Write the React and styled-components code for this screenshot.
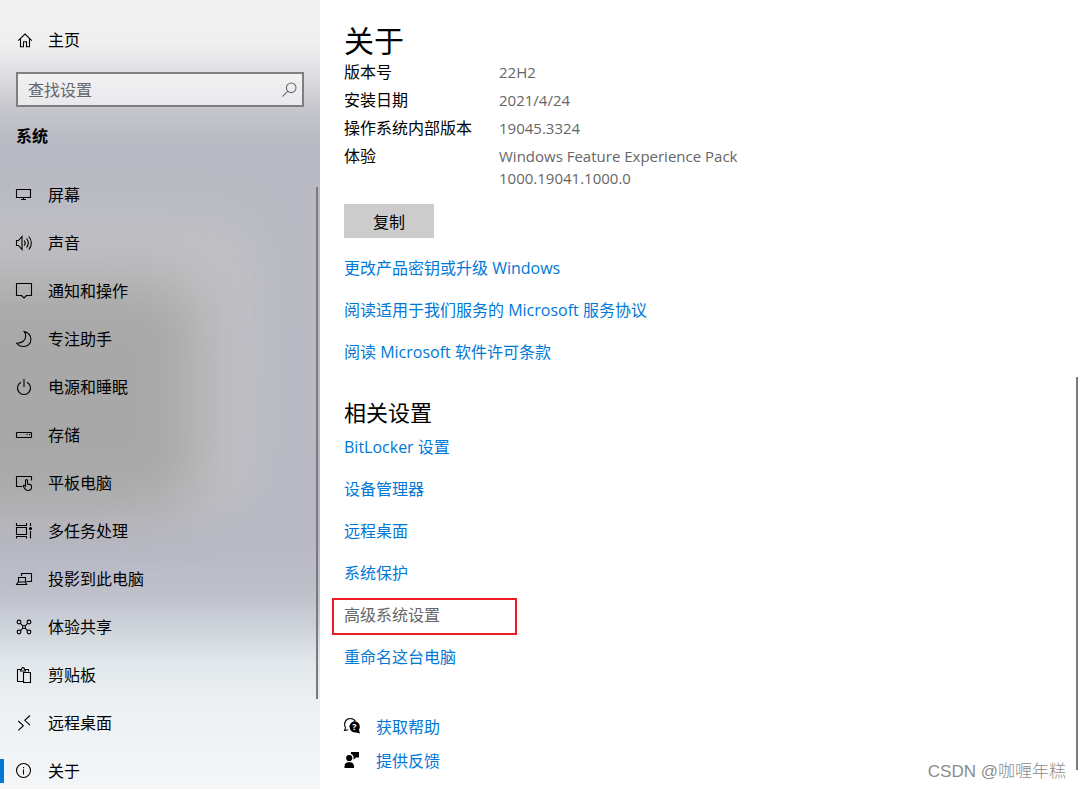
import styled, { createGlobalStyle } from "styled-components";

const GlobalStyle = createGlobalStyle`
  *,
  *::before,
  *::after {
    box-sizing: border-box;
  }

  body {
    margin: 0;
    background: #fff;
    color: #000;
    font-family: "Open Sans", "Noto Sans CJK SC", sans-serif;
    font-size: 16px;
    line-height: 22px;
  }

  a {
    color: inherit;
    text-decoration: none;
  }

  ul {
    list-style: none;
    margin: 0;
    padding: 0;
  }
`;

const Page = styled.div`
  position: relative;
  display: grid;
  grid-template-columns: 320px 1fr;
  height: 100vh;
  overflow: hidden;
`;

const Sidebar = styled.aside`
  position: relative;
  z-index: 0;
  display: flex;
  flex-direction: column;
  min-height: 0;
  padding-top: 16px;
  overflow: hidden;
  background: linear-gradient(
    to bottom,
    #f1f1f1 0,
    #efeff0 44px,
    #dedee1 76px,
    #c6c6cd 108px,
    #babac4 140px,
    #b9b9c5 540px,
    #bdbfc9 590px,
    #ccd1d9 625px,
    #e0e6ea 660px,
    #edf1f3 710px,
    #f5f6f7 789px
  );
`;

const Haze = styled.div`
  position: absolute;
  z-index: -1;
  left: -120px;
  top: ${({ $top }) => $top}px;
  width: ${({ $width }) => $width}px;
  height: ${({ $height }) => $height}px;
  border-radius: 40px;
  background: ${({ $color }) => $color};
  filter: blur(${({ $blur }) => $blur}px);
`;

const NavLink = styled.a`
  position: relative;
  display: flex;
  align-items: center;
  gap: 16px;
  height: 48px;
  padding: 0 16px;

  &[aria-current="page"]::before {
    content: "";
    position: absolute;
    left: 0;
    top: 12px;
    width: 4px;
    height: 24px;
    background: #0078d7;
  }
`;

const Search = styled.label`
  display: flex;
  align-items: center;
  flex-shrink: 0;
  height: 35px;
  margin: 8px 16px 5px;
  padding: 0 5px 0 10px;
  border: 2px solid #7f7f83;
  background: rgba(255, 255, 255, 0.6);
  color: #6a6a6d;
`;

const SearchInput = styled.input`
  flex: 1;
  min-width: 0;
  padding: 0;
  border: 0;
  outline: 0;
  background: transparent;
  font: inherit;

  &::placeholder {
    color: #66666a;
    opacity: 1;
  }
`;

const GroupTitle = styled.h2`
  flex-shrink: 0;
  margin: 0 16px 11px;
  font-size: 16px;
  line-height: 48px;
  font-weight: 700;
`;

const NavList = styled.ul`
  flex: 1;
  min-height: 0;
  overflow-y: auto;
  scrollbar-width: none;
`;

const ScrollThumb = styled.div`
  position: absolute;
  right: 2px;
  top: ${({ $top }) => $top}px;
  width: 2px;
  height: ${({ $height }) => $height}px;
  background: #7a7a7c;
`;

const Main = styled.main`
  min-width: 0;
  padding: 21px 24px 0;
  overflow-y: auto;
  scrollbar-width: none;
`;

const Title = styled.h1`
  margin: 0;
  font-size: 30px;
  line-height: 40px;
  font-weight: 400;
`;

const Specs = styled.dl`
  display: grid;
  grid-template-columns: 155px minmax(0, 250px);
  row-gap: 6px;
  margin: 0 0 15px;
`;

const Label = styled.dt``;

const Value = styled.dd`
  margin: 0;
  color: #666;
  font-size: 15px;
`;

const CopyButton = styled.button`
  width: 90px;
  height: 34px;
  margin-bottom: 19px;
  padding: 2px 0 0;
  border: 0;
  background: #ccc;
  color: #000;
  font: inherit;
`;

const SectionTitle = styled.h2`
  margin: 34px 0 9px;
  font-size: 22px;
  line-height: 30px;
  font-weight: 400;
`;

const LinkList = styled.ul`
  display: flex;
  flex-direction: column;
  gap: 20px;
  color: #0078d7;
`;

const LinkItem = styled.li`
  position: relative;
`;

const MarkedItem = styled(LinkItem)`
  color: #666;

  &::after {
    content: "";
    position: absolute;
    left: -12px;
    top: -6px;
    width: 185px;
    height: 37px;
    border: 2px solid #ed1c24;
    pointer-events: none;
  }
`;

const HelpList = styled(LinkList)`
  gap: 12px;
  margin-top: 48px;
`;

const HelpLink = styled.a`
  display: flex;
  align-items: center;
  gap: 16px;

  svg {
    color: #000;
  }
`;

const Watermark = styled.div`
  position: absolute;
  right: 14px;
  bottom: 6px;
  color: #8c8c8c;
  font-family: "Liberation Sans", "Noto Sans CJK SC", sans-serif;
  font-size: 17px;
  font-weight: 300;
`;

const Svg = styled.svg`
  flex-shrink: 0;
  width: 16px;
  height: 16px;
  overflow: visible;
  fill: none;
  stroke: currentColor;
  stroke-width: 1.1;
`;

const Icon = ({ children }) => (
  <Svg viewBox="0 0 16 16" aria-hidden="true">
    {children}
  </Svg>
);

const icons = {
  home: <path d="M2.2 8.7 9 2l6.8 6.7M4.5 6.7v8h3v-5h3v5h3v-8" />,
  search: (
    <>
      <circle cx="10.2" cy="5.8" r="4.8" />
      <path d="m6.8 9.2-5.5 5.5" />
    </>
  ),
  display: <path d="M.5 2.5h14v8H.5zM7.5 10.5v2M5 12.5h5" />,
  sound: (
    <>
      <path d="M.5 5.5h2l3.5-4v13l-3.5-4h-2z" />
      <path d="M8.2 5.5c1.2 1.5 1.2 3.5 0 5M10.5 3.5c2.2 2.7 2.2 6.3 0 9M12.8 1.5c3.4 3.8 3.4 9.2 0 13" />
    </>
  ),
  notify: <path d="M.5.5h15v12h-5L8 15l-2.5-2.5h-5z" />,
  moon: <path d="M8.3.6c4.2 1 6.6 4 6.6 7.8 0 4.2-3.2 7.1-7.2 7.1-3 0-5.6-1.2-7-3.3 5.5.1 9-2.8 9-7.2 0-1.7-.5-3.2-1.4-4.4z" />,
  power: <path d="M5 3.2a6.5 6.5 0 1 0 6 0M8 0v8" />,
  storage: (
    <>
      <rect x=".5" y="5.5" width="15" height="5" rx=".6" />
      <path d="M10.5 7.5h1.2M13 7.5h1.2" />
    </>
  ),
  tablet: (
    <>
      <path d="M6 11.5H.5v-10h15v4" />
      <path d="M9.5 11.2V5.7c0-1.5 2-1.5 2 0V9l2.8.6c.8.2 1.2.7 1.2 1.5v1.2c0 2-1.3 3.2-3.3 3.2-1.7 0-2.7-.6-3.5-1.9l-1.500-2.300c-.2-1 1-1.300 1.600-.7z" />
    </>
  ),
  multitask: (
    <>
      <path d="M.5 0v2.5h10V0M.5 4.5h10v7H.5zM.5 15.5v-2h10v2M14.5 0v3M14.5 8v7.5" />
      <circle cx="14.5" cy="5.5" r="1" fill="currentColor" />
    </>
  ),
  project: <path d="M5.5 5V2.5h10v8h-5M2.5 11V6.5h7V11M.6 13.5l1.6-2.5h7.2l1.3 2.5z" />,
  share: (
    <>
      <circle cx="3" cy="3" r="1.9" />
      <circle cx="13" cy="3" r="1.9" />
      <circle cx="3" cy="13" r="1.9" />
      <circle cx="13" cy="13" r="1.9" />
      <circle cx="8" cy="8" r="1.5" />
      <path d="m4.4 4.4 2.5 2.5M11.6 4.4 9.1 6.9M4.4 11.6l2.5-2.5M11.6 11.6 9.1 9.1" />
    </>
  ),
  clipboard: (
    <path d="M7 14.5H1.5v-12h3M9.5 2.5h3v2M4.5 4V2.5h1C5.500 0 8.500 0 8.500 2.500h1V4zM7.500 5.500h7v10h-7z" />
  ),
  remote: <path d="m2.3 6 5 4.7-5 4.7M14 .5 8.8 5.3l5.2 4.9" />,
  about: (
    <>
      <circle cx="7.5" cy="7.5" r="7" />
      <path d="M7.5 6.5v5M7.5 4v1.3" />
    </>
  ),
};

const navItems = [
  { icon: "display", name: "屏幕" },
  { icon: "sound", name: "声音" },
  { icon: "notify", name: "通知和操作" },
  { icon: "moon", name: "专注助手" },
  { icon: "power", name: "电源和睡眠" },
  { icon: "storage", name: "存储" },
  { icon: "tablet", name: "平板电脑" },
  { icon: "multitask", name: "多任务处理" },
  { icon: "project", name: "投影到此电脑" },
  { icon: "share", name: "体验共享" },
  { icon: "clipboard", name: "剪贴板" },
  { icon: "remote", name: "远程桌面" },
  { icon: "about", name: "关于", current: true },
];

const specs = [
  ["版本号", "22H2"],
  ["安装日期", "2021/4/24"],
  ["操作系统内部版本", "19045.3324"],
  ["体验", "Windows Feature Experience Pack 1000.19041.1000.0"],
];

const licenseLinks = [
  "更改产品密钥或升级 Windows",
  "阅读适用于我们服务的 Microsoft 服务协议",
  "阅读 Microsoft 软件许可条款",
];

const relatedLinks = [
  { name: "BitLocker 设置" },
  { name: "设备管理器" },
  { name: "远程桌面" },
  { name: "系统保护" },
  { name: "高级系统设置", marked: true },
  { name: "重命名这台电脑" },
];

function HelpIcon() {
  return (
    <Icon>
      <path d="M1.6 8.6C-1 4.200 1.800-.5 6.200-.5c2.400 0 4.200 1 5.200 2.800M1.600 8.600.5 11.500l3.700-.8" />
      <path
        stroke="none"
        fill="currentColor"
        d="M10.3 2.200a5.700 5.700 0 0 1 4.700 8.800l1 3.600-3.800-1.100a5.700 5.700 0 1 1-1.900-11.300z"
      />
      <text
        x="10.3"
        y="11"
        fill="#fff"
        stroke="none"
        fontSize="9"
        fontWeight="700"
        textAnchor="middle"
      >
        ?
      </text>
    </Icon>
  );
}

function FeedbackIcon() {
  return (
    <Icon>
      <g fill="currentColor" stroke="none">
        <circle cx="5.2" cy="5" r="3.1" />
        <path d="M.5 15v-1.700c0-2.500 1.700-4.100 4-4.100H6c2.300 0 4 1.600 4 4.100V15z" />
        <path d="M7-1h8v5.500h-3L9.500 6.700V4C9.300 2.500 8.500 1.300 7 1z" />
      </g>
    </Icon>
  );
}

export default function App() {
  return (
    <>
      <GlobalStyle />
      <Page>
        <Sidebar>
          <Haze $top={222} $width={372} $height={290} $blur={24} $color="#c1c1c4" />
          <Haze $top={280} $width={318} $height={232} $blur={28} $color="#a8a8a8" />
          <NavLink href="#home">
            <Icon>{icons.home}</Icon>
            主页
          </NavLink>
          <Search>
            <SearchInput type="text" placeholder="查找设置" aria-label="查找设置" />
            <Icon>{icons.search}</Icon>
          </Search>
          <GroupTitle>系统</GroupTitle>
          <NavList>
            {navItems.map((item) => (
              <li key={item.name}>
                <NavLink href={`#${item.icon}`} aria-current={item.current ? "page" : undefined}>
                  <Icon>{icons[item.icon]}</Icon>
                  {item.name}
                </NavLink>
              </li>
            ))}
          </NavList>
          <ScrollThumb $top={187} $height={512} />
        </Sidebar>

        <Main>
          <Title>关于</Title>
          <Specs>
            {specs.map(([label, value]) => [
              <Label key={label}>{label}</Label>,
              <Value key={value}>{value}</Value>,
            ])}
          </Specs>
          <CopyButton type="button">复制</CopyButton>
          <LinkList>
            {licenseLinks.map((name) => (
              <LinkItem key={name}>
                <a href="#license">{name}</a>
              </LinkItem>
            ))}
          </LinkList>

          <SectionTitle>相关设置</SectionTitle>
          <LinkList>
            {relatedLinks.map(({ name, marked }) => {
              const Item = marked ? MarkedItem : LinkItem;
              return (
                <Item key={name}>
                  <a href="#related">{name}</a>
                </Item>
              );
            })}
          </LinkList>

          <HelpList>
            <li>
              <HelpLink href="#help">
                <HelpIcon />
                获取帮助
              </HelpLink>
            </li>
            <li>
              <HelpLink href="#feedback">
                <FeedbackIcon />
                提供反馈
              </HelpLink>
            </li>
          </HelpList>
        </Main>
        <ScrollThumb $top={377} $height={393} />
        <Watermark>CSDN @咖喱年糕</Watermark>
      </Page>
    </>
  );
}
